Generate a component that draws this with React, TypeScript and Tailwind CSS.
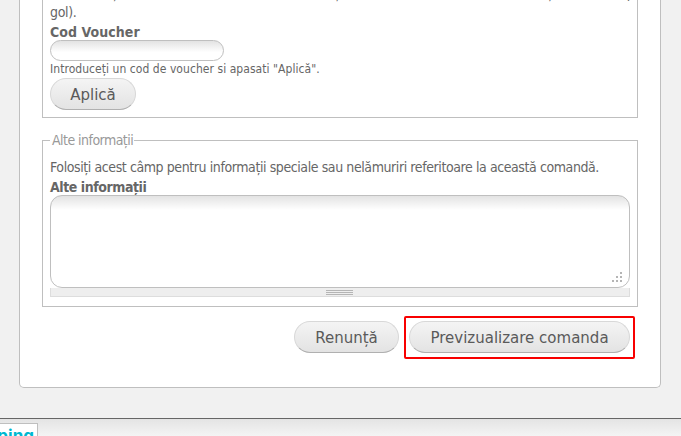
import type { ReactNode } from "react";

const body = "font-['DejaVu_Sans_Condensed','DejaVu_Sans',sans-serif] whitespace-nowrap";

function PillButton({ className, children }: { className: string; children: ReactNode }) {
  return (
    <button
      className={`h-8 shrink-0 rounded-full border border-[#d8d8d8] border-b-[#b0b0b0] bg-linear-to-b from-[#f4f4f4] to-[#e3e3e3] pt-px text-center font-['DejaVu_Sans',sans-serif] text-[15px] leading-[30px] whitespace-nowrap text-[#5a5a5a] ${className}`}
    >
      {children}
    </button>
  );
}

export default function App() {
  return (
    <div className="flex h-[436px] w-[681px] flex-col overflow-hidden bg-[#f1f1f1] text-[#666]">
      <main className="ml-[19px] h-[388px] w-[642px] shrink-0 rounded-b-[5px] border border-t-0 border-[#bfbfbf] bg-white pl-[22px]">
        <section className="h-[118px] w-[596px] overflow-hidden border border-t-0 border-[#bfbfbf] px-[7px]">
          <p className={`-mt-4 h-[38px] text-[14px] leading-[19px] tracking-[-0.35px] ${body}`}>
            <span className="tracking-[0.2px]">Introduceți un cod de voucher (dacă nu aveți un cod de voucher, atunci lăsați acest câmp</span>
            <br />
            gol).
          </p>
          <label className={`mt-px block h-[17px] text-[14px] leading-[18px] font-bold tracking-[0.05px] ${body}`}>Cod Voucher</label>
          <input className="block h-[21px] w-[174px] rounded-full border border-[#bfbfbf] bg-linear-to-b from-[#e3e3e3] to-white to-60%" />
          <p className={`h-[17px] text-[12px] leading-[17px] tracking-[0.05px] ${body}`}>Introduceți un cod de voucher si apasati "Aplică".</p>
          <PillButton className="w-[86px]">Aplică</PillButton>
        </section>

        <fieldset className="mt-[14px] h-[175px] w-[596px] border border-[#bfbfbf] px-[7px]">
          <legend className={`h-[17px] pr-px pl-[2px] text-[14px] leading-[17px] tracking-[-0.54px] text-[#999] ${body}`}>Alte informații</legend>
          <p className={`mt-[8px] h-5 text-[14px] leading-5 tracking-[-0.41px] ${body}`}>
            Folosiți acest câmp pentru informații speciale sau nelămuriri referitoare la această comandă.
          </p>
          <label className={`block h-[18px] text-[14px] leading-5 font-bold tracking-[-0.44px] ${body}`}>Alte informații</label>
          <div className="flex h-[93px] w-[580px] items-end justify-end rounded-[12px] border border-[#bfbfbf] bg-linear-to-b from-[#e3e3e3] to-white to-[14px] pr-[7px] pb-[5px]">
            <svg width="10" height="10" fill="#b5b5b5" shapeRendering="crispEdges">
              <path d="M8 0h2v2H8zM4 4h2v2H4zM8 4h2v2H8zM0 8h2v2H0zM4 8h2v2H4zM8 8h2v2H8z" />
            </svg>
          </div>
          <div className="flex h-[9px] w-[580px] items-center justify-center border border-t-0 border-[#ddd] bg-[#eee] pr-px">
            <div className="flex w-[27px] flex-col gap-px">
              <i className="h-px bg-[#b5b5b5]" />
              <i className="h-px bg-[#b5b5b5]" />
              <i className="h-px bg-[#b5b5b5]" />
            </div>
          </div>
        </fieldset>

        <div className="mt-[9px] flex w-[593px] items-start justify-end gap-[5px]">
          <div className="pt-[5px]">
            <PillButton className="w-[105px]">Renunță</PillButton>
          </div>
          <div className="flex h-[43px] w-[231px] items-start justify-center rounded-[2px] border-2 border-[#f80000] pt-[3px]">
            <PillButton className="w-[221px]">Previzualizare comanda</PillButton>
          </div>
        </div>
      </main>

      <footer className="mt-[30px] h-[18px] shrink-0 border-t border-[#666] bg-linear-to-b from-[#e4e4e4] to-[#f4f4f4] pt-1">
        <div className="flex h-[30px] w-[38px] justify-end border border-l-0 border-[#bfbfbf] bg-white pr-[3px] font-[Inter,sans-serif] text-[17px] leading-[25px] font-bold text-[#00b8d0]">
          <span>ping</span>
        </div>
      </footer>
    </div>
  );
}
